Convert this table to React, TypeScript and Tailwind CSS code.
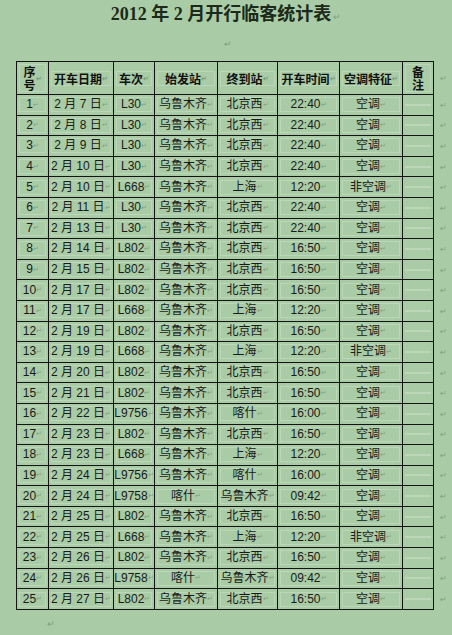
import React from "react";

type Row = [string, string, string, string, string, string, string];

const rows: Row[] = [
  ["1", "2 月 7 日", "L30", "乌鲁木齐", "北京西", "22:40", "空调"],
  ["2", "2 月 8 日", "L30", "乌鲁木齐", "北京西", "22:40", "空调"],
  ["3", "2 月 9 日", "L30", "乌鲁木齐", "北京西", "22:40", "空调"],
  ["4", "2 月 10 日", "L30", "乌鲁木齐", "北京西", "22:40", "空调"],
  ["5", "2 月 10 日", "L668", "乌鲁木齐", "上海", "12:20", "非空调"],
  ["6", "2 月 11 日", "L30", "乌鲁木齐", "北京西", "22:40", "空调"],
  ["7", "2 月 13 日", "L30", "乌鲁木齐", "北京西", "22:40", "空调"],
  ["8", "2 月 14 日", "L802", "乌鲁木齐", "北京西", "16:50", "空调"],
  ["9", "2 月 15 日", "L802", "乌鲁木齐", "北京西", "16:50", "空调"],
  ["10", "2 月 17 日", "L802", "乌鲁木齐", "北京西", "16:50", "空调"],
  ["11", "2 月 17 日", "L668", "乌鲁木齐", "上海", "12:20", "空调"],
  ["12", "2 月 19 日", "L802", "乌鲁木齐", "北京西", "16:50", "空调"],
  ["13", "2 月 19 日", "L668", "乌鲁木齐", "上海", "12:20", "非空调"],
  ["14", "2 月 20 日", "L802", "乌鲁木齐", "北京西", "16:50", "空调"],
  ["15", "2 月 21 日", "L802", "乌鲁木齐", "北京西", "16:50", "空调"],
  ["16", "2 月 22 日", "L9756", "乌鲁木齐", "喀什", "16:00", "空调"],
  ["17", "2 月 23 日", "L802", "乌鲁木齐", "北京西", "16:50", "空调"],
  ["18", "2 月 23 日", "L668", "乌鲁木齐", "上海", "12:20", "空调"],
  ["19", "2 月 24 日", "L9756", "乌鲁木齐", "喀什", "16:00", "空调"],
  ["20", "2 月 24 日", "L9758", "喀什", "乌鲁木齐", "09:42", "空调"],
  ["21", "2 月 25 日", "L802", "乌鲁木齐", "北京西", "16:50", "空调"],
  ["22", "2 月 25 日", "L668", "乌鲁木齐", "上海", "12:20", "非空调"],
  ["23", "2 月 26 日", "L802", "乌鲁木齐", "北京西", "16:50", "空调"],
  ["24", "2 月 26 日", "L9758", "喀什", "乌鲁木齐", "09:42", "空调"],
  ["25", "2 月 27 日", "L802", "乌鲁木齐", "北京西", "16:50", "空调"],
];

const widths = ["w-[32px]", "w-[65px]", "w-[41px]", "w-[63px]", "w-[60px]", "w-[62px]", "w-[63px]", "w-[31px]"];

function Mark() {
  return <span className="text-[7px] leading-[8px] text-[#7f9f7c]">↵</span>;
}

function Cell({ children, bold, mark = true }: { children?: React.ReactNode; bold?: boolean; mark?: boolean }) {
  return (
    <td className="border border-[#141414] p-[2px] h-full overflow-hidden">
      <div
        className={
          "h-full flex items-center justify-center border border-[#bcd7b8] whitespace-nowrap " +
          (bold
            ? "font-bold text-[12px] leading-[13px] text-[#111] [font-family:'Noto_Sans_CJK_SC',sans-serif]"
            : "text-[12px] leading-[13px] text-[#1a1a1a] [font-family:'Liberation_Sans','Noto_Sans_CJK_SC',sans-serif]")
        }
      >
        {children}
        {mark && <Mark />}
      </div>
    </td>
  );
}

function Stack({ a, b }: { a: string; b: string }) {
  return (
    <span className="flex flex-col items-center leading-[13px]">
      <span>{a}</span>
      <span>{b}</span>
    </span>
  );
}

export default function App() {
  const headers = ["开车日期", "车次", "始发站", "终到站", "开车时间", "空调特征"];
  return (
    <div className="w-[452px] h-[635px] bg-[#a9cca6] overflow-hidden">
      <div className="pt-[4px] h-[24px] text-center text-[18px] leading-[20px] font-bold text-[#1b2a1a] [font-family:'Liberation_Serif','Noto_Sans_CJK_SC',serif]">
        2012 年 2 月开行临客统计表<span className="text-[9px] font-normal text-[#7f9f7c] ml-[2px]">↵</span>
      </div>
      <div className="h-[37px] flex justify-center pt-[14px] pl-[4px]">
        <span className="text-[9px] leading-[12px] text-[#7f9f7c]">↵</span>
      </div>
      <table className="ml-[16px] w-[436px] border-collapse table-fixed">
        <colgroup>
          {widths.map((w, i) => (
            <col key={i} className={w} />
          ))}
          <col className="w-[19px]" />
        </colgroup>
        <tbody>
          <tr className="h-[32px]">
            <Cell bold>
              <Stack a="序" b="号" />
            </Cell>
            {headers.map((h) => (
              <Cell bold key={h}>
                {h}
              </Cell>
            ))}
            <Cell bold mark={false}>
              <Stack a="备" b="注" />
            </Cell>
            <td className="text-[8px] leading-[10px] text-[#7f9f7c] text-center">↵</td>
          </tr>
          {rows.map((r) => (
            <tr key={r[0]} className="h-[20.6px]">
              {r.map((c, i) => (
                <Cell key={i}>{c}</Cell>
              ))}
              <Cell mark={false}></Cell>
              <td className="text-[8px] leading-[10px] text-[#7f9f7c] text-center">↵</td>
            </tr>
          ))}
        </tbody>
      </table>
      <div className="pl-[47px] pt-[8px] text-[9px] leading-[12px] text-[#7f9f7c]">↵</div>
    </div>
  );
}
